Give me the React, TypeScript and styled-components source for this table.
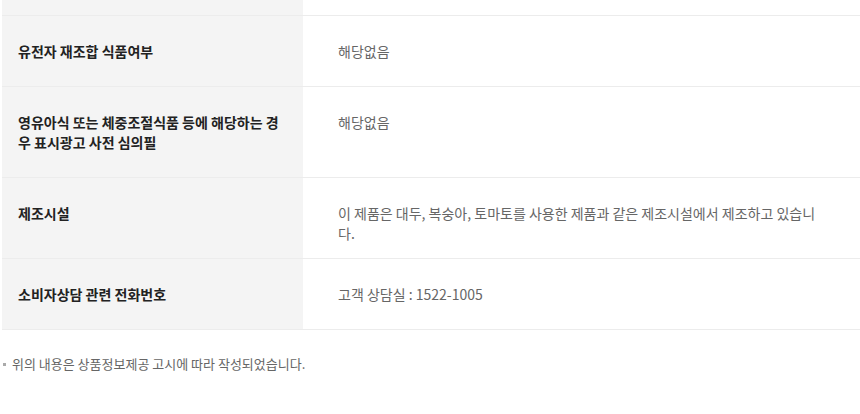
import React from "react";
import styled, { createGlobalStyle } from "styled-components";

const Global = createGlobalStyle`
  html, body { margin: 0; padding: 0; background: #fff; }
  body { font-family: "Noto Sans CJK KR", "Noto Sans", sans-serif; }
`;

const Page = styled.div`
  width: 860px;
  height: 414px;
  overflow: hidden;
`;

const Table = styled.div`
  margin-left: 2px;
  display: flex;
  flex-direction: column;
`;

const Row = styled.div<{ $h?: number }>`
  display: grid;
  grid-template-columns: 301px 1fr;
  border-bottom: 1px solid #ececec;
  ${(p) => (p.$h !== undefined ? `height: ${p.$h}px;` : "")}
`;

const Head = styled.div<{ $pad?: boolean }>`
  background: #f4f4f4;
  padding: ${(p) => (p.$pad === false ? "0" : "25px 14px 25px 16px")};
  font-size: 14px;
  line-height: 20px;
  font-weight: 700;
  color: #222;
  word-break: break-all;
`;

const Cell = styled.div<{ $pad?: boolean }>`
  background: #fff;
  padding: ${(p) => (p.$pad === false ? "0" : "25px 38px 15px 35px")};
  font-size: 14px;
  line-height: 20px;
  color: #666;
  word-break: break-all;
`;

const Note = styled.p`
  margin: 25px 0 0 0;
  display: flex;
  align-items: center;
  gap: 6px;
  font-size: 13px;
  line-height: 18px;
  color: #666;
  &::before {
    content: "";
    width: 3px;
    height: 3px;
    margin-left: 3px;
    background: #aaa;
  }
`;

const rows: [string, string][] = [
  ["유전자 재조합 식품여부", "해당없음"],
  ["영유아식 또는 체중조절식품 등에 해당하는 경우 표시광고 사전 심의필", "해당없음"],
  ["제조시설", "이 제품은 대두, 복숭아, 토마토를 사용한 제품과 같은 제조시설에서 제조하고 있습니다."],
  ["소비자상담 관련 전화번호", "고객 상담실 : 1522-1005"],
];

export default function App() {
  return (
    <Page>
      <Global />
      <Table>
        <Row $h={15}>
          <Head $pad={false} />
          <Cell $pad={false} />
        </Row>
        {rows.map(([h, v]) => (
          <Row key={h}>
            <Head>{h}</Head>
            <Cell>{v}</Cell>
          </Row>
        ))}
      </Table>
      <Note>위의 내용은 상품정보제공 고시에 따라 작성되었습니다.</Note>
    </Page>
  );
}
